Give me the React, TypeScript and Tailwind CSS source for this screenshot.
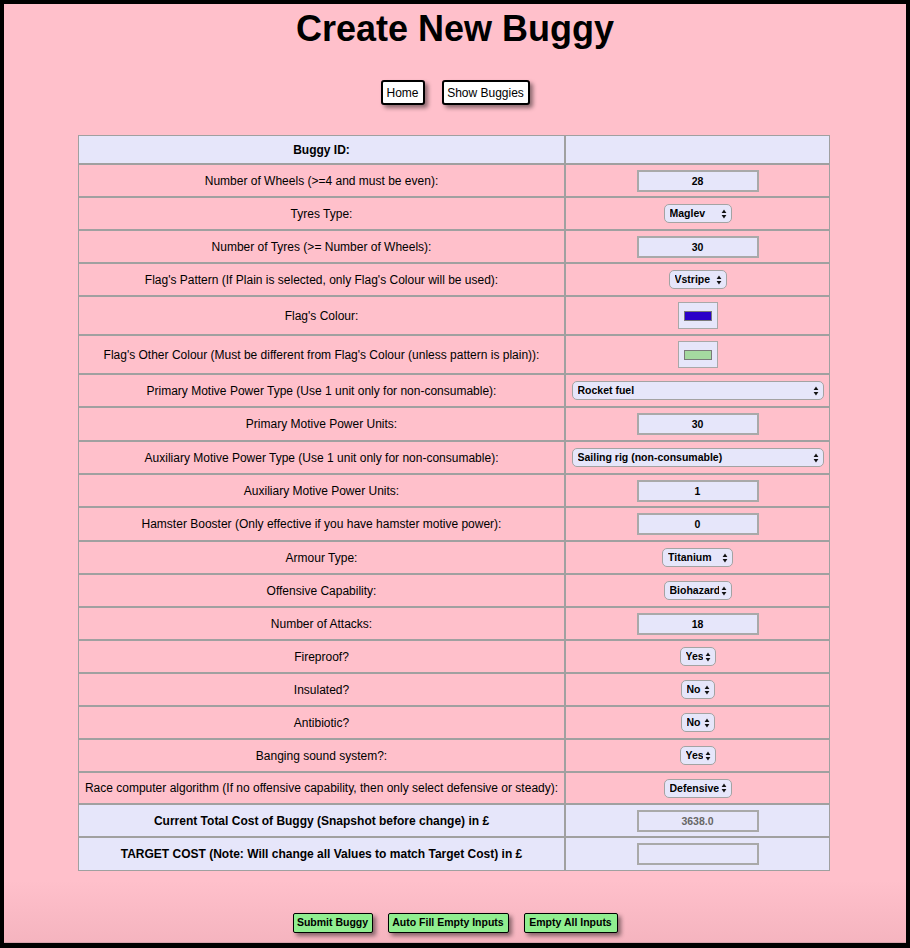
import React from 'react'

type Base = { label: string; h?: number }
type Row = Base & (
  | { kind: 'input'; value: string; bold?: boolean; readOnly?: boolean; lavender?: boolean }
  | { kind: 'select'; value: string; options: string[]; width: string }
  | { kind: 'wide'; value: string; options: string[] }
  | { kind: 'color'; color: string }
)

const ROWS: Row[] = [
  { label: 'Number of Wheels (>=4 and must be even):', kind: 'input', value: '28' },
  { label: 'Tyres Type:', kind: 'select', value: 'Maglev', options: ['Knobbly', 'Slick', 'Steelband', 'Reactive', 'Maglev'], width: 'w-[68px]' },
  { label: 'Number of Tyres (>= Number of Wheels):', kind: 'input', value: '30' },
  { label: "Flag's Pattern (If Plain is selected, only Flag's Colour will be used):", kind: 'select', value: 'Vstripe', options: ['Plain', 'Vstripe', 'Hstripe', 'Dstripe', 'Checker', 'Spot'], width: 'w-[58px]' },
  { label: "Flag's Colour:", kind: 'color', color: '#2a00c8', h: 39 },
  { label: "Flag's Other Colour (Must be different from Flag's Colour (unless pattern is plain)):", kind: 'color', color: '#a5d9a0', h: 39 },
  { label: 'Primary Motive Power Type (Use 1 unit only for non-consumable):', kind: 'wide', value: 'Rocket fuel', options: ['Petrol', 'Fusion', 'Steam', 'Bio', 'Electric', 'Rocket fuel', 'Hamster', 'Thermo', 'Solar', 'Wind'] },
  { label: 'Primary Motive Power Units:', kind: 'input', value: '30', h: 34 },
  { label: 'Auxiliary Motive Power Type (Use 1 unit only for non-consumable):', kind: 'wide', value: 'Sailing rig (non-consumable)', options: ['None', 'Petrol', 'Sailing rig (non-consumable)', 'Solar panel (non-consumable)'] },
  { label: 'Auxiliary Motive Power Units:', kind: 'input', value: '1' },
  { label: 'Hamster Booster (Only effective if you have hamster motive power):', kind: 'input', value: '0', h: 34 },
  { label: 'Armour Type:', kind: 'select', value: 'Titanium', options: ['None', 'Wood', 'Aluminium', 'Thinsteel', 'Thicksteel', 'Titanium'], width: 'w-[71px]' },
  { label: 'Offensive Capability:', kind: 'select', value: 'Biohazard', options: ['None', 'Spike', 'Flame', 'Charge', 'Biohazard'], width: 'w-[68px]' },
  { label: 'Number of Attacks:', kind: 'input', value: '18' },
  { label: 'Fireproof?', kind: 'select', value: 'Yes', options: ['Yes', 'No'], width: 'w-[36px]' },
  { label: 'Insulated?', kind: 'select', value: 'No', options: ['Yes', 'No'], width: 'w-[34px]' },
  { label: 'Antibiotic?', kind: 'select', value: 'No', options: ['Yes', 'No'], width: 'w-[34px]' },
  { label: 'Banging sound system?:', kind: 'select', value: 'Yes', options: ['Yes', 'No'], width: 'w-[36px]' },
  { label: 'Race computer algorithm (If no offensive capability, then only select defensive or steady):', kind: 'select', value: 'Defensive', options: ['Steady', 'Defensive', 'Offensive', 'Titfortat', 'Random'], width: 'w-[68px]', h: 32 },
  { label: 'Current Total Cost of Buggy (Snapshot before change) in £', kind: 'input', value: '3638.0', bold: true, readOnly: true, lavender: true },
  { label: 'TARGET COST (Note: Will change all Values to match Target Cost) in £', kind: 'input', value: '', bold: true, lavender: true, h: 34 },
]

const ctrlFont = "font-['Liberation_Sans',Arial,sans-serif] text-[10.5px] font-bold"

function Arrows(): JSX.Element {
  return (
    <svg className="pointer-events-none absolute right-[5px] top-1/2 -translate-y-1/2" width="6" height="10" viewBox="0 0 6 10">
      <path d="M0.6 4 L3 0.6 L5.4 4 Z" fill="#111" />
      <path d="M0.6 6 L3 9.4 L5.4 6 Z" fill="#111" />
    </svg>
  )
}

function Select({ value, options, width }: { value: string; options: string[]; width: string }): JSX.Element {
  return (
    <span className={`relative inline-block align-middle ${width}`}>
      <select
        defaultValue={value}
        className={`block h-[19px] w-full appearance-none rounded-[5px] border border-[#a3a3a3] bg-[#e6e6fa] py-0 pl-[5px] pr-[12px] leading-[17px] text-black outline-none ${ctrlFont}`}
      >
        {options.map((o) => <option key={o} value={o}>{o}</option>)}
      </select>
      <Arrows />
    </span>
  )
}

function Swatch({ color }: { color: string }): JSX.Element {
  return (
    <span className="inline-flex h-[27px] w-[40px] items-center justify-center border-[1.5px] border-[#a8a8a8] bg-[#e6e6fa] align-middle">
      <span className="block h-[10px] w-[28px] border border-[#7a7a7a]" style={{ backgroundColor: color }} />
    </span>
  )
}

const heightClass: Record<number, string> = {
  32: 'h-[32px]',
  33: 'h-[33px]',
  34: 'h-[34px]',
  39: 'h-[39px]',
}

export default function App(): JSX.Element {
  return (
    <div className="flex h-[948px] w-[910px] flex-col border-x-4 border-t-4 border-b-[5px] border-black bg-[#ffc0cb] font-['Liberation_Sans',Arial,sans-serif] text-black">
      <h1 className="mt-[5px] text-center text-[36px] font-bold leading-[40px]">Create New Buggy</h1>

      {/* Nav */}
      <div className="mt-[31px] flex justify-center gap-[17px]">
        <button type="button" className="h-[25px] w-[44px] rounded-[3px] border-2 border-black bg-white text-[12px] shadow-[3px_3px_4px_rgba(0,0,0,0.45)]">Home</button>
        <button type="button" className="h-[25px] w-[88px] rounded-[3px] border-2 border-black bg-white text-[12px] shadow-[3px_3px_4px_rgba(0,0,0,0.45)]">Show Buggies</button>
      </div>

      {/* Form table */}
      <table className="ml-[74px] mt-[30px] w-[752px] border-separate border-spacing-0 text-[12px]">
        <colgroup>
          <col className="w-[487px]" />
          <col className="w-[265px]" />
        </colgroup>
        <tbody>
          <tr>
            <td className="h-[29px] border border-[#a0a0a0] bg-[#e6e6fa] text-center font-bold">Buggy ID:</td>
            <td className="h-[29px] border border-[#a0a0a0] bg-[#e6e6fa]" />
          </tr>
          {ROWS.map((row) => {
            const lav = row.kind === 'input' && row.lavender
            const h = heightClass[row.h ?? 33]
            return (
              <tr key={row.label}>
                <td className={`${h} border border-[#a0a0a0] text-center ${lav ? 'bg-[#e6e6fa]' : ''} ${row.kind === 'input' && row.bold ? 'font-bold' : ''}`}>
                  {row.label}
                </td>
                <td className={`${h} border border-[#a0a0a0] text-center ${lav ? 'bg-[#e6e6fa]' : ''}`}>
                  {row.kind === 'input' && (
                    <input
                      type="text"
                      defaultValue={row.value}
                      readOnly={row.readOnly}
                      className={`h-[22px] w-[122px] border-2 border-[#a9a9a9] bg-[#e6e6fa] text-center align-middle outline-none ${ctrlFont} ${row.readOnly ? 'text-[#666]' : 'text-black'}`}
                    />
                  )}
                  {row.kind === 'select' && <Select value={row.value} options={row.options} width={row.width} />}
                  {row.kind === 'wide' && <Select value={row.value} options={row.options} width="w-[252px]" />}
                  {row.kind === 'color' && <Swatch color={row.color} />}
                </td>
              </tr>
            )
          })}
        </tbody>
      </table>

      {/* Footer actions */}
      <div className="mt-auto flex h-[63px] items-start justify-center gap-[15px] border-b border-[#d8a2ac] bg-gradient-to-b from-[#ffc0cb] to-[#f5b4bf] pt-[33px]">
        <button type="button" className={`h-[20px] w-[80px] rounded-[2px] border-[1.5px] border-black bg-[#90ee90] shadow-[3px_3px_4px_rgba(0,0,0,0.45)] ${ctrlFont}`}>Submit Buggy</button>
        <button type="button" className={`h-[20px] w-[121px] rounded-[2px] border-[1.5px] border-black bg-[#90ee90] shadow-[3px_3px_4px_rgba(0,0,0,0.45)] ${ctrlFont}`}>Auto Fill Empty Inputs</button>
        <button type="button" className={`h-[20px] w-[94px] rounded-[2px] border-[1.5px] border-black bg-[#90ee90] shadow-[3px_3px_4px_rgba(0,0,0,0.45)] ${ctrlFont}`}>Empty All Inputs</button>
      </div>
    </div>
  )
}
